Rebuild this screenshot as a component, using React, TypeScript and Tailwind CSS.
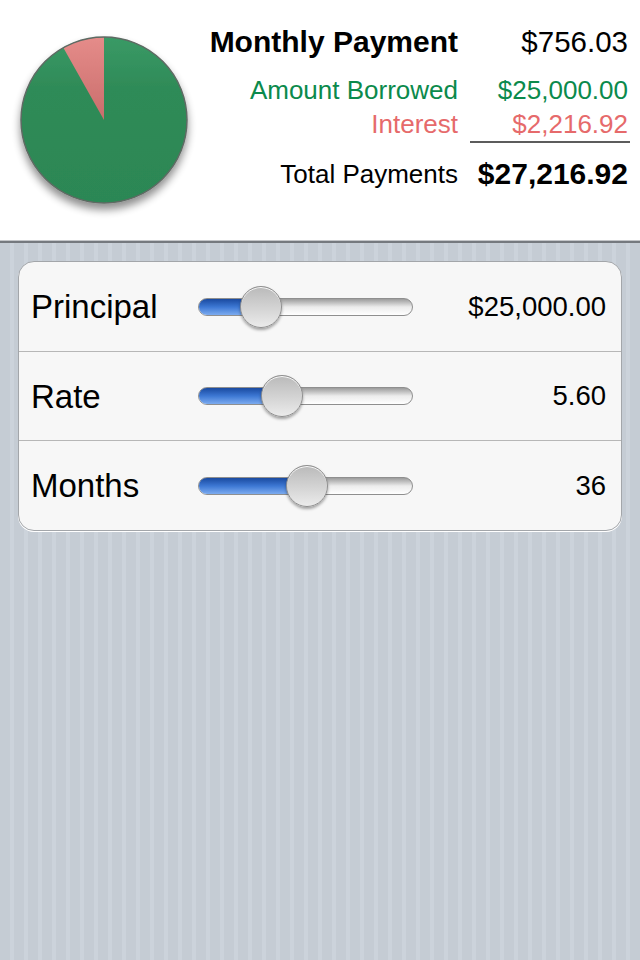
import React from "react";

const font = { fontFamily: '"Liberation Sans", Helvetica, Arial, sans-serif' };

interface SliderRow {
  label: string;
  value: string;
  pos: number; // 0..1 along the thumb travel
}

const rows: SliderRow[] = [
  { label: "Principal", value: "$25,000.00", pos: 0.243 },
  { label: "Rate", value: "5.60", pos: 0.364 },
  { label: "Months", value: "36", pos: 0.509 },
];

function PieChart() {
  // interest share of total payments, drawn counter-clockwise from 12 o'clock
  const share = 2216.92 / 27216.92;
  const cx = 104;
  const cy = 120;
  const r = 83;
  const a = share * Math.PI * 2;
  const x = cx - r * Math.sin(a);
  const y = cy - r * Math.cos(a);

  return (
    <svg width="208" height="240" viewBox="0 0 208 240" className="shrink-0">
      <defs>
        <filter id="pieShadow" x="-30%" y="-30%" width="160%" height="170%">
          <feGaussianBlur in="SourceAlpha" stdDeviation="4" />
          <feOffset dy="6" result="b" />
          <feComponentTransfer>
            <feFuncA type="linear" slope="0.45" />
          </feComponentTransfer>
          <feMerge>
            <feMergeNode />
            <feMergeNode in="SourceGraphic" />
          </feMerge>
        </filter>
        <linearGradient id="green" x1="0" y1="0" x2="0" y2="1">
          <stop offset="0" stopColor="#3a9a66" />
          <stop offset="0.3" stopColor="#2f8b58" />
          <stop offset="1" stopColor="#2c8754" />
        </linearGradient>
        <linearGradient id="red" x1="0" y1="0" x2="0" y2="1">
          <stop offset="0" stopColor="#e58c8a" />
          <stop offset="1" stopColor="#c96d6b" />
        </linearGradient>
      </defs>
      <g filter="url(#pieShadow)">
        <circle cx={cx} cy={cy} r={r} fill="url(#green)" />
        <path
          d={`M ${cx} ${cy} L ${cx} ${cy - r} A ${r} ${r} 0 0 0 ${x} ${y} Z`}
          fill="url(#red)"
        />
        <circle
          cx={cx}
          cy={cy}
          r={r}
          fill="none"
          stroke="#5e6a63"
          strokeWidth="1.5"
        />
      </g>
    </svg>
  );
}

function Slider({ pos }: { pos: number }) {
  const travel = 215 - 42;
  const center = 21 + travel * pos;

  return (
    <div className="relative w-[215px] h-[44px] shrink-0 flex items-center">
      <div className="relative w-full h-[18px] rounded-full border border-[#8f8f8f] bg-gradient-to-b from-[#9c9c9c] via-[#ececec] to-white overflow-hidden">
        <div
          className="absolute left-0 top-0 bottom-0 bg-gradient-to-b from-[#1a4aa0] via-[#3d78d4] to-[#7cabef]"
          style={{ width: center }}
        />
      </div>
      <div
        className="absolute top-[1px] w-[42px] h-[42px] rounded-full border border-[#8e8e8e] bg-gradient-to-b from-[#bababa] to-[#ebebeb] shadow-[0_2px_3px_rgba(0,0,0,0.35),inset_0_1px_0_rgba(255,255,255,0.9)]"
        style={{ left: center - 21 }}
      />
    </div>
  );
}

export default function App() {
  return (
    <div style={font} className="w-[640px] h-[960px] flex flex-col bg-[repeating-linear-gradient(90deg,#c5ccd4_0px,#c5ccd4_10px,#ccd3db_10px,#ccd3db_14px)]">
      {/* Summary header */}
      <div className="h-[240px] bg-white flex">
        <PieChart />
        <div className="pt-[25px] grid grid-cols-[250px_160px] gap-x-[12px] content-start">
          <div className="text-right text-[30px] leading-[34px] font-bold text-black">
            Monthly Payment
          </div>
          <div className="text-right text-[29.5px] leading-[34px] text-black pr-[2px]">
            $756.03
          </div>

          <div className="mt-[14px] text-right text-[26px] leading-[34px] text-[#0b8a4c]">
            Amount Borrowed
          </div>
          <div className="mt-[14px] text-right text-[26px] leading-[34px] text-[#0b8a4c] pr-[2px]">
            $25,000.00
          </div>

          <div className="text-right text-[26px] leading-[34px] text-[#e66a6b]">
            Interest
          </div>
          <div className="text-right text-[26px] leading-[34px] text-[#e66a6b] pr-[2px] border-b-2 border-[#5c5c5c]">
            $2,216.92
          </div>

          <div className="mt-[11px] text-right text-[26px] leading-[40px] text-black">
            Total Payments
          </div>
          <div className="mt-[11px] text-right text-[30px] leading-[40px] font-bold text-black pr-[2px]">
            $27,216.92
          </div>
        </div>
      </div>
      <div className="h-[1px] bg-[#c4c6c9]" />
      <div className="h-[2px] bg-[#75797e]" />

      {/* Sliders card */}
      <div className="mt-[18px] mx-[18px] rounded-[16px] border border-[#a3a6aa] bg-[#f7f7f7] shadow-[0_1px_0_#ffffff] overflow-hidden">
        {rows.map((row, idx) => (
          <div
            key={row.label}
            className={`flex items-center pl-[12px] pr-[15px] ${
              idx === 2 ? "h-[90px]" : "h-[89px]"
            } ${idx > 0 ? "border-t border-[#b7b7b7]" : ""}`}
          >
            <div className="w-[167px] shrink-0 text-[33px] text-black leading-none">
              {row.label}
            </div>
            <Slider pos={row.pos} />
            <div className="flex-1 text-right text-[27.5px] text-black leading-none">
              {row.value}
            </div>
          </div>
        ))}
      </div>
    </div>
  );
}
